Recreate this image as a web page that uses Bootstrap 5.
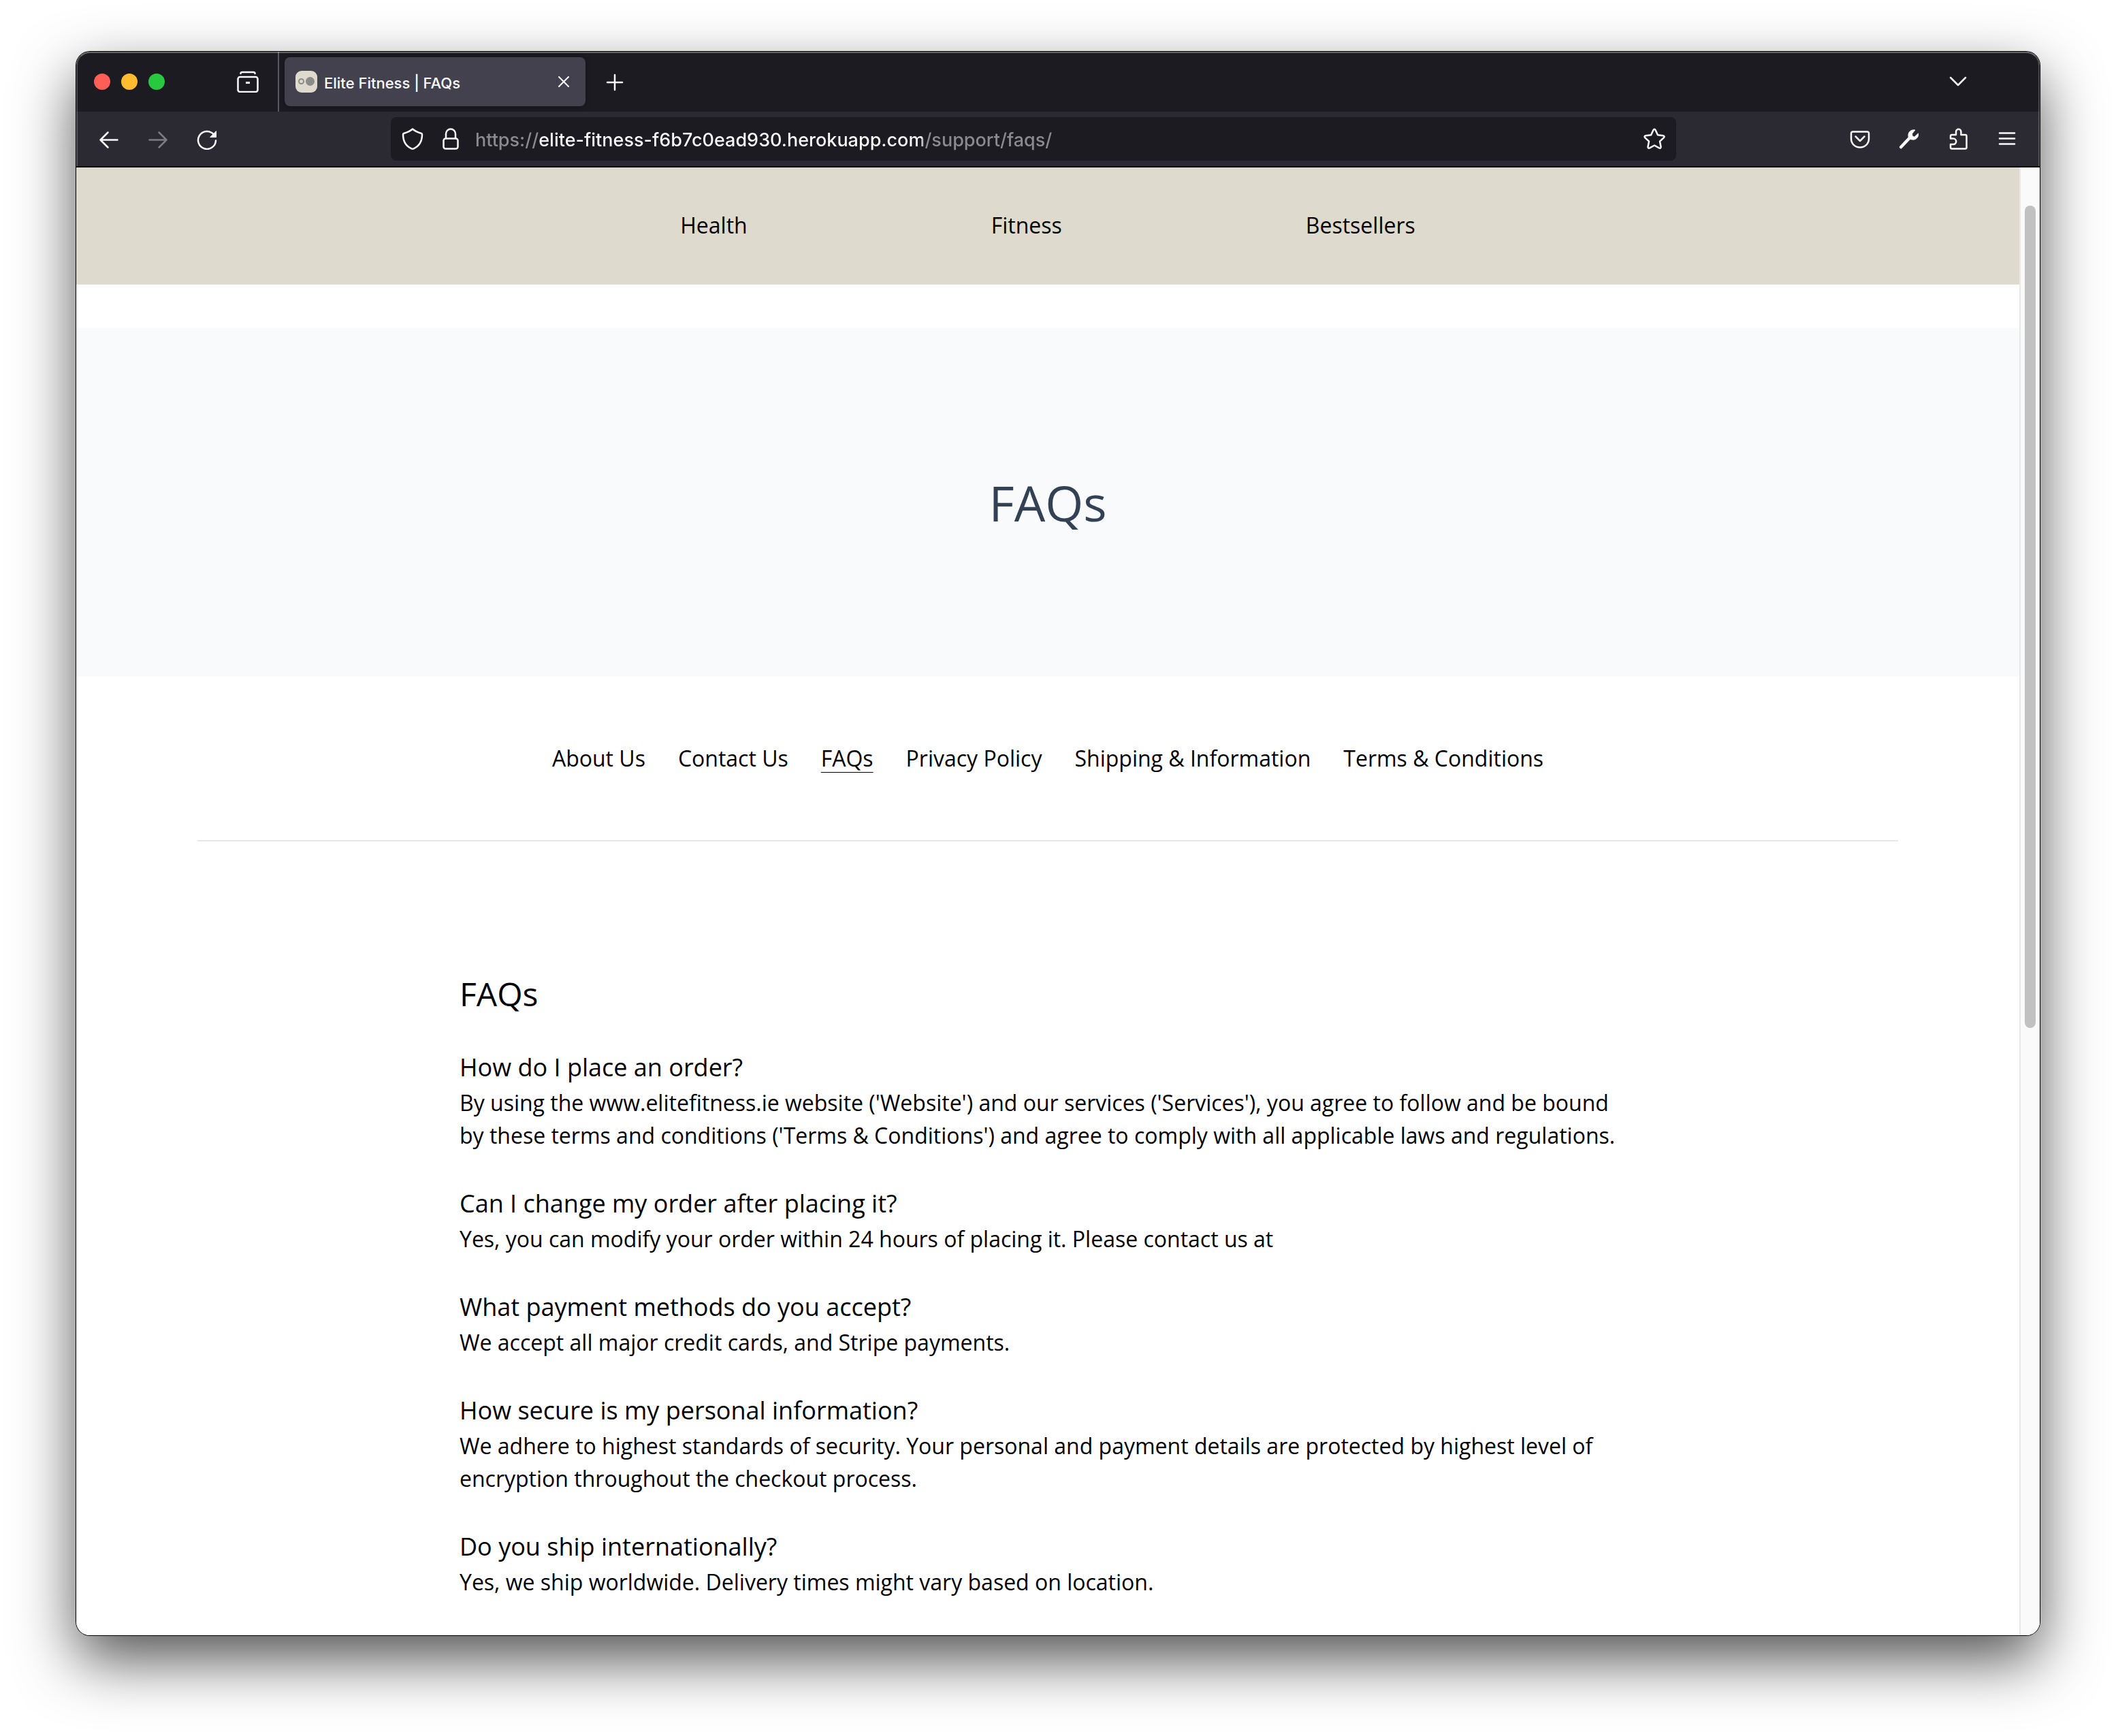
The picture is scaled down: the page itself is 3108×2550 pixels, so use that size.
<!DOCTYPE html>
<html lang="en">
<head>
<meta charset="utf-8">
<meta name="viewport" content="width=device-width, initial-scale=1">
<title>Elite Fitness | FAQs</title>
<link href="https://cdn.jsdelivr.net/npm/bootstrap@5.3.0/dist/css/bootstrap.min.css" rel="stylesheet">
<style>
  body { font-family: "Open Sans", sans-serif; font-size: 32px; line-height: 48px; color: #000; background: #fff; padding: 76px 112px 148px; }
  a { color: inherit; text-decoration: none; }

  /* browser window */
  .app-window { border-radius: 20px; box-shadow: 0 0 0 1px #000, 0 36px 88px rgba(0, 0, 0, .68); }
  .chrome { font-family: Inter, sans-serif; font-weight: 500; color: #fbfbfe; border-bottom: 2px solid #0c0c0d; border-radius: 20px 20px 0 0; }
  .chrome::after { content: ""; position: absolute; inset: 0; border: 2px solid rgba(255, 255, 255, .2); border-top-color: rgba(255, 255, 255, .32); border-bottom: 0; border-radius: 20px 20px 0 0; pointer-events: none; }
  .chrome svg { display: block; width: 32px; height: 32px; fill: none; stroke: currentColor; stroke-width: 2.5; stroke-linecap: round; stroke-linejoin: round; flex: none; }
  .chrome svg.close-mark { width: 16px; height: 16px; stroke-width: 2; }
  .chrome button { display: flex; align-items: center; justify-content: center; padding: 0; border: 0; background: none; color: inherit; flex: none; }
  .tabstrip { height: 88px; background: #1c1b22; padding-left: 26px; padding-right: 104px; border-radius: 20px 20px 0 0; }
  .chrome .light { width: 24px; height: 24px; border-radius: 50%; }
  .light-red { background: #ff5f57 !important; }
  .light-amber { background: #febc2e !important; }
  .light-green { background: #28c840 !important; }
  .recent { margin-left: 106px; margin-right: 28px; }
  .strip-line { width: 2px; background: #5b5a62; }
  .active-tab { width: 442px; height: 72px; margin-left: 8px; padding: 0 24px 0 16px; border-radius: 8px; background: #42414d; font-size: 22px; line-height: 32px; box-shadow: 0 0 8px rgba(0, 0, 0, .4); }
  .tab-title { margin-left: 10px; padding-top: 3px; }
  .new-tab { margin-left: 27px; }
  .toolbar { height: 80px; background: #2b2a33; padding: 0 12px; }
  .chrome .tool { width: 72px; height: 72px; }
  .chrome .tool:disabled { color: #7d7c83; }
  .bar-gap { width: 234px; flex: none; }
  .address { height: 64px; border-radius: 8px; background: #1c1b22; padding: 0 16px; }
  .lock-icon { margin-left: 24px; }
  .address input { border: 0; outline: 0; padding: 2px 0 0; margin-left: 20px; font-size: 27px; font-weight: 500; line-height: 40px; height: 42px; min-width: 0; color: #fbfbfe; -webkit-text-fill-color: transparent; background: linear-gradient(90deg, #8b8a90 0 93px, #fbfbfe 93px 657px, #8b8a90 657px); background-clip: text; -webkit-background-clip: text; }

  /* page */
  .viewport { border-radius: 0 0 20px 20px; }
  .site-nav { background: #dedace; padding: 61px 0 63px; gap: 358px; }
  .hero { margin-top: 64px; height: 512px; background: #f8fafc; color: #334155; }
  .hero h1 { font-size: 72px; line-height: 80px; font-weight: 400; margin: 0; }
  .support-wrap { padding: 0 178px; }
  .support-nav { padding: 96px 0; gap: 48px; border-bottom: 2px solid #e5e7eb; }
  .support-nav .current { text-decoration: underline; text-decoration-thickness: 1px; text-underline-offset: 8px; }
  .faq { max-width: 1728px; margin: 0 auto; padding: 192px 0 32px; }
  .faq h2 { font-size: 48px; line-height: 64px; font-weight: 400; margin: 0 0 48px; }
  .faq h3 { font-size: 36px; line-height: 56px; font-weight: 400; margin: 0; }
  .faq p { margin: 0 0 48px; }
  .faq section:last-child p { margin: 0; }
  .scroll-track { width: 30px; flex: none; background: #fafafa; border-left: 2px solid #e8e8e8; border-bottom-right-radius: 20px; padding: 56px 6px 0; }
  .scroll-thumb { height: 1208px; border-radius: 8px; background: #c1c1c1; }
</style>
<script src="https://cdn.jsdelivr.net/npm/bootstrap@5.3.0/dist/js/bootstrap.bundle.min.js"></script>
</head>
<body class="d-flex flex-column min-vh-100">
<div class="app-window d-flex flex-column flex-grow-1">
  <header class="chrome position-relative">
    <div class="tabstrip d-flex align-items-center">
      <div class="d-flex gap-3">
        <button class="light light-red" type="button" aria-label="Close window"></button>
        <button class="light light-amber" type="button" aria-label="Minimise window"></button>
        <button class="light light-green" type="button" aria-label="Zoom window"></button>
      </div>
      <button class="recent" type="button" aria-label="Recent browsing">
        <svg viewBox="0 0 32 32"><rect x="1.5" y="9" width="29" height="22" rx="3"/><path d="M5.5 4q0-2 2.500-2h16q2.500 0 2.500 2"/><path d="M13 17.500h6" stroke-linecap="butt" stroke-width="3"/></svg>
      </button>
      <div class="strip-line align-self-stretch"></div>
      <div class="active-tab d-flex align-items-center">
        <svg viewBox="0 0 32 32"><rect width="32" height="32" rx="9" fill="#dedace" stroke="none"/><circle cx="8.500" cy="15.500" r="3.500" stroke="#8b8b88" stroke-width="2"/><circle cx="21.500" cy="15.500" r="6.500" fill="#8b8b88" stroke="none"/></svg>
        <span class="tab-title flex-grow-1 text-nowrap">Elite Fitness | FAQs</span>
        <button type="button" aria-label="Close tab"><svg class="close-mark" viewBox="0 0 16 16"><path d="M1 1l14 14M15 1L1 15"/></svg></button>
      </div>
      <button class="new-tab" type="button" aria-label="New tab"><svg viewBox="0 0 32 32"><path d="M16 6v22M5 17h22"/></svg></button>
      <button class="ms-auto" type="button" aria-label="List all tabs"><svg viewBox="0 0 32 32"><path d="M5 10l11 11 11-11"/></svg></button>
    </div>
    <div class="toolbar d-flex align-items-center">
      <button class="tool" type="button" aria-label="Back"><svg viewBox="0 0 32 32"><path d="M3.500 17.500h25M14.500 6.500l-11 11 11 11"/></svg></button>
      <button class="tool" type="button" aria-label="Forward" disabled><svg viewBox="0 0 32 32"><path d="M3.500 17.500h25M17.500 6.500l11 11-11 11"/></svg></button>
      <button class="tool" type="button" aria-label="Reload"><svg viewBox="0 0 32 32"><path d="M29 18.500A13 13 0 1 1 25.500 9"/><path d="M29.500 5v8.500h-8.500z" fill="currentColor" stroke-width="1"/></svg></button>
      <div class="bar-gap"></div>
      <div class="address d-flex align-items-center flex-grow-1">
        <svg viewBox="0 0 32 32"><path d="M16 1.500c4 3.500 8 5 13 6.500q1 .3 1 1.500c0 10-4 17-12.500 20.800q-1.500.7-3 0C6 26.500 2 19.500 2 9.500q0-1.200 1-1.500c5-1.500 9-3 13-6.500z"/></svg>
        <svg class="lock-icon" viewBox="0 0 32 32"><rect x="5.500" y="15.500" width="21" height="15" rx="3"/><path d="M9 15V8.500a7 7 0 0 1 14 0V15"/></svg>
        <input class="flex-grow-1" type="text" aria-label="Address" value="https://elite-fitness-f6b7c0ead930.herokuapp.com/support/faqs/" spellcheck="false">
        <button type="button" aria-label="Bookmark this page"><svg viewBox="0 0 32 32"><path d="M14.300 3.300q1.700-3 3.400 0l3.200 7 7.800 1q3 .7 1 3l-5.700 5.400 1.500 7.800q.2 3-2.600 1.800L16 25.500l-6.900 3.800q-2.800 1.200-2.600-1.800L8 19.700l-5.700-5.400q-2-2.300 1-3l7.800-1z"/></svg></button>
      </div>
      <div class="bar-gap"></div>
      <button class="tool" type="button" aria-label="Save to Pocket"><svg viewBox="0 0 32 32"><path d="M5.500 5.500h21q2.500 0 2.500 2.500v8a13 12.500 0 0 1-26 0V8q0-2.500 2.500-2.500z"/><path d="M9.500 12.500l6.500 6.500 6.500-6.500"/></svg></button>
      <button class="tool" type="button" aria-label="Developer tools"><svg viewBox="0 0 32 32"><path d="M4.200 28L17 14.500" stroke-width="4.500"/><path d="M24.500 3c-5.500-1-10 3-9.500 8.500-.3 3 2.500 5.500 5.500 5.500C26 18 30.500 13.500 29.500 8l-5.500 5.200-3-1-.5-3.500z" fill="currentColor" stroke-width="1"/></svg></button>
      <button class="tool" type="button" aria-label="Extensions"><svg viewBox="0 0 32 32"><path d="M5 15.500V12q0-2 2-2h6V5.500a3.700 3.700 0 0 1 7.400 0V10H26.500q2 0 2 2v16.500q0 2-2 2H7q-2 0-2-2V24h4a4.200 4.200 0 0 0 0-8.400z"/></svg></button>
      <button class="tool" type="button" aria-label="Menu"><svg viewBox="0 0 32 32"><path d="M5 7.500h22M5 15.500h22M5 23.500h22"/></svg></button>
    </div>
  </header>

  <div class="viewport d-flex flex-grow-1 bg-white">
    <div class="flex-grow-1">
      <nav class="site-nav d-flex justify-content-center" aria-label="Shop">
        <a href="#">Health</a>
        <a href="#">Fitness</a>
        <a href="#">Bestsellers</a>
      </nav>
      <div class="hero d-flex align-items-center justify-content-center"><h1>FAQs</h1></div>
      <div class="support-wrap">
        <nav class="support-nav d-flex justify-content-center" aria-label="Support">
          <a href="#">About Us</a>
          <a href="#">Contact Us</a>
          <a href="#" class="current" aria-current="page">FAQs</a>
          <a href="#">Privacy Policy</a>
          <a href="#">Shipping &amp; Information</a>
          <a href="#">Terms &amp; Conditions</a>
        </nav>
      </div>
      <main class="faq">
        <h2>FAQs</h2>
        <section>
          <h3>How do I place an order?</h3>
          <p>By using the www.elitefitness.ie website ('Website') and our services ('Services'), you agree to follow and be bound by these terms and conditions ('Terms &amp; Conditions') and agree to comply with all applicable laws and regulations.</p>
        </section>
        <section>
          <h3>Can I change my order after placing it?</h3>
          <p>Yes, you can modify your order within 24 hours of placing it. Please contact us at</p>
        </section>
        <section>
          <h3>What payment methods do you accept?</h3>
          <p>We accept all major credit cards, and Stripe payments.</p>
        </section>
        <section>
          <h3>How secure is my personal information?</h3>
          <p>We adhere to highest standards of security. Your personal and payment details are protected by highest level of encryption throughout the checkout process.</p>
        </section>
        <section>
          <h3>Do you ship internationally?</h3>
          <p>Yes, we ship worldwide. Delivery times might vary based on location.</p>
        </section>
      </main>
    </div>
    <div class="scroll-track" aria-hidden="true"><div class="scroll-thumb"></div></div>
  </div>
</div>
</body>
</html>
